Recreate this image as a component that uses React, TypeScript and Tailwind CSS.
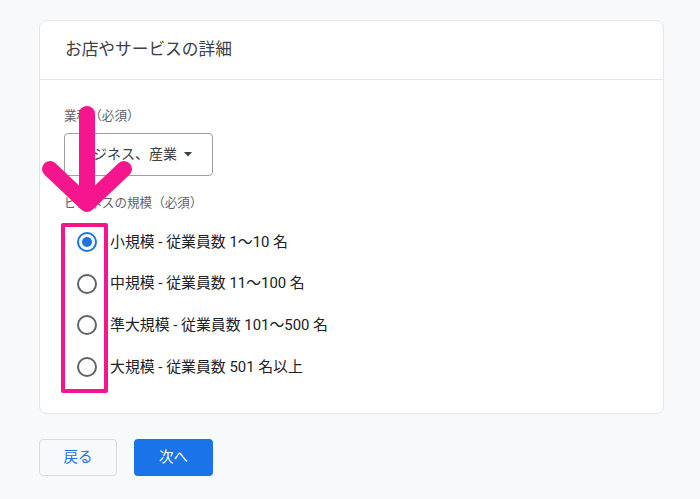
import React from "react";

const options = [
  "小規模 - 従業員数 1～10 名",
  "中規模 - 従業員数 11～100 名",
  "準大規模 - 従業員数 101～500 名",
  "大規模 - 従業員数 501 名以上",
];

export default function App() {
  return (
    <div
      className="relative w-[700px] h-[499px] bg-[#f8f9fa] pt-[20px] pl-[39px] overflow-hidden"
      style={{ fontFamily: "Roboto, 'Noto Sans CJK JP', sans-serif" }}
    >
      <div className="w-[625px] h-[394px] bg-white border border-[#e3e5e8] rounded-[8px] flex flex-col">
        <div className="h-[59px] border-b border-[#e3e5e8] flex items-center pl-[25px] text-[16.7px] text-[#3c4043]">
          お店やサービスの詳細
        </div>
        <div className="pl-[24px] pt-[28px] flex flex-col">
          <div className="text-[12.6px] leading-[16px] text-[#5f6368]">業種（必須）</div>
          <div className="mt-[9px] w-[149px] h-[43px] border border-[#9aa0a6] rounded-[4px] flex items-center pl-[14px] gap-[7px] text-[14px] text-[#3c4043]">
            <span>ビジネス、産業</span>
            <svg width="8" height="5" viewBox="0 0 8 5"><path d="M0 0 L8 0 L4 4.5 Z" fill="#3c4043" /></svg>
          </div>
          <div className="mt-[19px] text-[12.6px] leading-[16px] text-[#5f6368]">ビジネスの規模（必須）</div>
          <div className="mt-[10px] flex flex-col">
            {options.map((o, i) => (
              <div key={o} className="h-[41.7px] flex items-center">
                <div className="w-[46px] flex justify-center">
                  {i === 0 ? (
                    <div className="w-[20px] h-[20px] rounded-full border-2 border-[#1a73e8] flex items-center justify-center">
                      <div className="w-[10px] h-[10px] rounded-full bg-[#1a73e8]" />
                    </div>
                  ) : (
                    <div className="w-[20px] h-[20px] rounded-full border-2 border-[#5f6368]" />
                  )}
                </div>
                <span className="text-[14.9px] text-[#202124]">{o}</span>
              </div>
            ))}
          </div>
        </div>
      </div>
      <div className="mt-[25px] flex gap-[17px]">
        <button className="w-[78px] h-[37px] rounded-[4px] border border-[#dadce0] bg-[#f8f9fa] text-[14.5px] text-[#1a73e8]">
          戻る
        </button>
        <button className="w-[79px] h-[37px] rounded-[4px] bg-[#1a73e8] text-[14.5px] text-white">
          次へ
        </button>
      </div>

      {/* annotation overlays */}
      <div className="absolute left-[61px] top-[223px] w-[47px] h-[170px] border-[4px] border-[#f5168e] rounded-[2px]" />
      <svg className="absolute left-0 top-0" width="700" height="499" viewBox="0 0 700 499">
        <g stroke="#f5168e" strokeWidth="16" strokeLinecap="round" strokeLinejoin="round" fill="none">
          <path d="M87 114 L87 196" />
          <path d="M50 169 L87 204 L124 169" />
        </g>
      </svg>
    </div>
  );
}
